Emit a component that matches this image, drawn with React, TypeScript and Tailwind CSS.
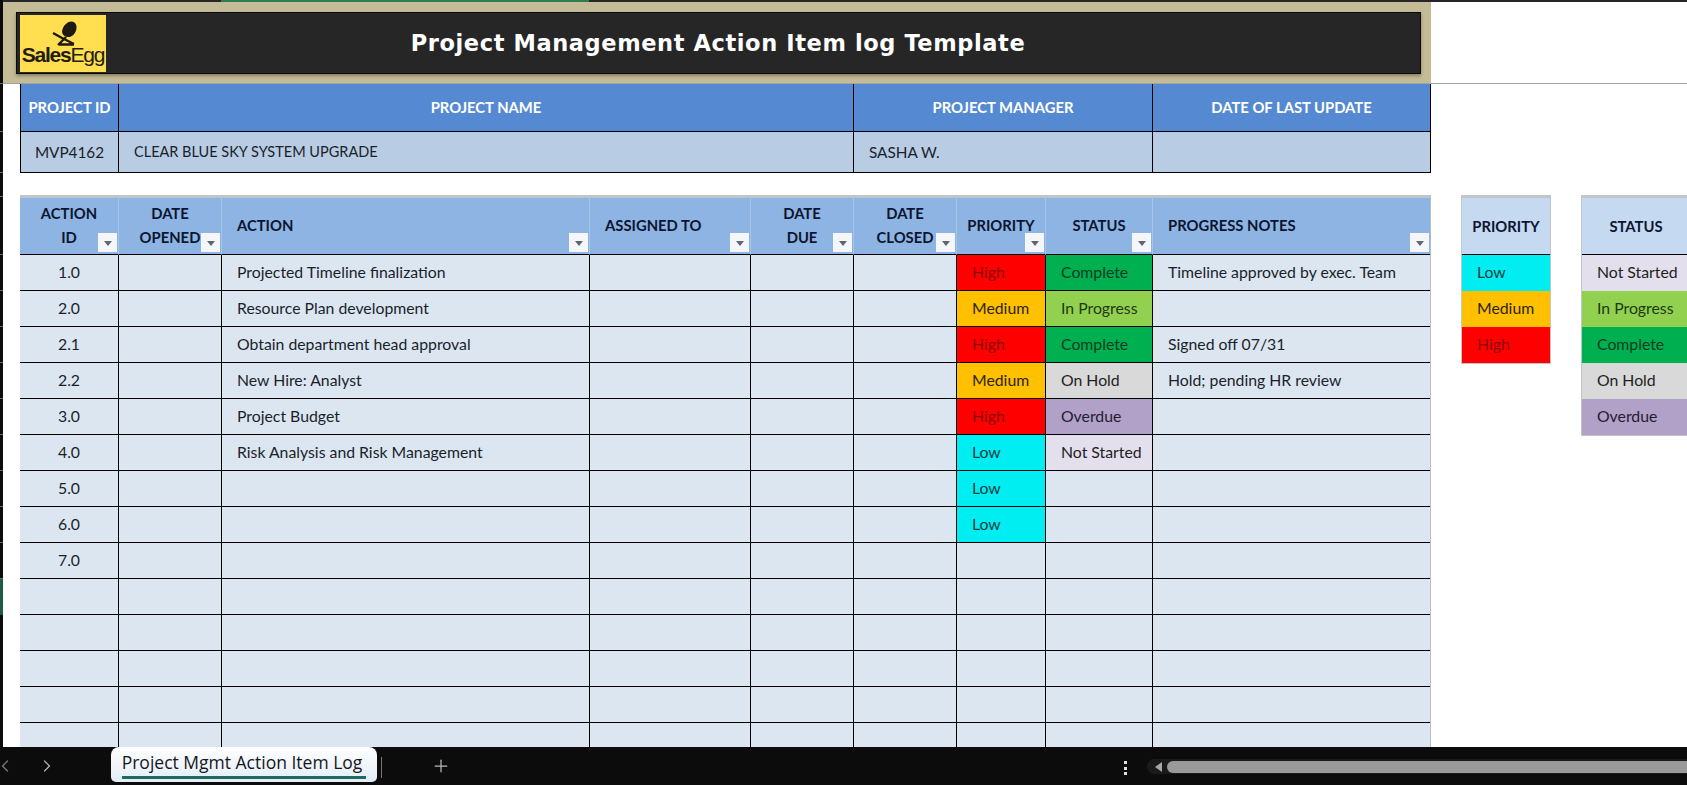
import { ChevronLeft, ChevronRight, Plus } from "lucide-react";

const BODY_FONT = "font-['Lato','Noto_Sans',sans-serif]";

const actionCols = [
  { label: ["ACTION", "ID"], align: "center" },
  { label: ["DATE", "OPENED"], align: "center" },
  { label: ["ACTION"], align: "left" },
  { label: ["ASSIGNED TO"], align: "left" },
  { label: ["DATE", "DUE"], align: "center" },
  { label: ["DATE", "CLOSED"], align: "center" },
  { label: ["PRIORITY"], align: "center" },
  { label: ["STATUS"], align: "center" },
  { label: ["PROGRESS NOTES"], align: "left" },
];

type Row = {
  id?: string;
  action?: string;
  priority?: "High" | "Medium" | "Low";
  status?: keyof typeof statusColors;
  notes?: string;
};

const priorityColors = {
  High: "bg-[#ff0000] text-[#8a0a0a]",
  Medium: "bg-[#ffc000] text-[#2c2410]",
  Low: "bg-[#00eef2] text-[#0f3c40]",
};

const statusColors = {
  Complete: "bg-[#00b050] text-[#063d20]",
  "In Progress": "bg-[#92d050] text-[#1f3a10]",
  "On Hold": "bg-[#d9d9d9] text-[#222222]",
  Overdue: "bg-[#b1a0c7] text-[#241c30]",
  "Not Started": "bg-[#e4dfec] text-[#222222]",
};

const rows: Row[] = [
  { id: "1.0", action: "Projected Timeline finalization", priority: "High", status: "Complete", notes: "Timeline approved by exec. Team" },
  { id: "2.0", action: "Resource Plan development", priority: "Medium", status: "In Progress" },
  { id: "2.1", action: "Obtain department head approval", priority: "High", status: "Complete", notes: "Signed off 07/31" },
  { id: "2.2", action: "New Hire: Analyst", priority: "Medium", status: "On Hold", notes: "Hold; pending HR review" },
  { id: "3.0", action: "Project Budget", priority: "High", status: "Overdue" },
  { id: "4.0", action: "Risk Analysis and Risk Management", priority: "Low", status: "Not Started" },
  { id: "5.0", priority: "Low" },
  { id: "6.0", priority: "Low" },
  { id: "7.0" },
  {},
  {},
  {},
  {},
  {},
];

function FilterButton() {
  return (
    <span className="absolute bottom-[2px] right-[1px] flex h-[19px] w-[19px] items-center justify-center bg-[#f4f6fa]">
      <span className="mt-[2px] h-0 w-0 border-x-[4px] border-t-[5px] border-x-transparent border-t-[#5f6670]" />
    </span>
  );
}

function Logo() {
  return (
    <div className="flex h-[57px] w-[86px] flex-col items-center bg-[#ffdf4f] pt-[5px]">
      <svg width="30" height="28" viewBox="0 0 30 28" className="ml-[4px] shrink-0">
        <path d="M21.5 1.5c3.8 0 5.8 3.7 4.8 8C25.3 14.3 21.3 17.6 17.5 17 13.2 16.5 11 12.7 12.6 9 14.2 4.8 17.6 1.5 21.5 1.5z" fill="#1d1a12" />
        <path d="M3 13l9 5 12 6M8 25l8-8M9 24.5h15" stroke="#1d1a12" strokeWidth="2.4" fill="none" />
      </svg>
      <div className="mt-[-4px] whitespace-nowrap font-['Liberation_Sans',sans-serif] text-[21px] leading-[22px] tracking-[-1.2px] text-[#221d10]">
        <span className="font-bold">Sales</span>
        <span>Egg</span>
      </div>
    </div>
  );
}

function GutterTicks() {
  // row header column is scrolled nearly out of view, only ticks stay visible
  return (
    <div className="flex w-[3px] shrink-0 flex-col bg-[#0b0b0b]">
      <div className="h-[84px] border-b border-[#6b6b6b]" />
      <div className="h-[48px] border-b border-[#6b6b6b]" />
      <div className="h-[41px] border-b border-[#6b6b6b]" />
      <div className="h-[24px] border-b border-[#6b6b6b]" />
      <div className="h-[58px] border-b border-[#6b6b6b]" />
      {rows.slice(0, 9).map((_, i) => (
        <div key={i} className="h-[36px] border-b border-[#6b6b6b]" />
      ))}
      <div className="h-[36px] bg-[#1f5a45]" />
    </div>
  );
}

function ColumnRuler() {
  return (
    <div className="flex h-[2px] bg-[#26262a]">
      <div className="w-[218px]" />
      <div className="w-[368px] bg-[#2e7d52]" />
    </div>
  );
}

function ActionTable() {
  return (
    <div className="grid w-[1411px] shrink-0 grid-cols-[98px_103px_368px_161px_103px_103px_89px_107px_278px] border-r border-[#bdbdbd]">
      {actionCols.map((col, i) => (
        <div
          key={i}
          className={`relative flex h-[60px] flex-col justify-center border-t-[3px] border-b border-t-[#c0c4cb] border-b-black bg-[#8db4e2] text-[14.8px] font-bold leading-[23.5px] text-[#0c1530] ${
            i > 0 ? "border-l border-l-[#a9c4e8]" : ""
          } ${col.align === "center" ? "items-center pb-[1px] text-center" : "items-start pl-[15px] pb-[1px]"}`}
        >
          {col.label.map((line) => (
            <span key={line}>{line}</span>
          ))}
          <FilterButton />
        </div>
      ))}
      {rows.map((row, i) => (
        <div key={i} className="contents text-[15.8px] text-[#1a1f2a]">
          <div className="flex h-[36px] items-center justify-center border-b border-black bg-[#dce6f1] pb-[2px]">{row.id}</div>
          <div className="h-[36px] border-b border-l border-black bg-[#dce6f1]" />
          <div className="flex h-[36px] items-center border-b border-l border-black bg-[#dce6f1] pb-[2px] pl-[15px]">{row.action}</div>
          <div className="h-[36px] border-b border-l border-black bg-[#dce6f1]" />
          <div className="h-[36px] border-b border-l border-black bg-[#dce6f1]" />
          <div className="h-[36px] border-b border-l border-black bg-[#dce6f1]" />
          <div
            className={`flex h-[36px] items-center border-b border-l border-black pb-[2px] pl-[15px] ${
              row.priority ? priorityColors[row.priority] : "bg-[#dce6f1]"
            }`}
          >
            {row.priority}
          </div>
          <div
            className={`flex h-[36px] items-center border-b border-l border-black pb-[2px] pl-[15px] ${
              row.status ? statusColors[row.status] : "bg-[#dce6f1]"
            }`}
          >
            {row.status}
          </div>
          <div className="flex h-[36px] items-center border-b border-l border-black bg-[#dce6f1] pb-[2px] pl-[15px]">{row.notes}</div>
        </div>
      ))}
    </div>
  );
}

function Legend({
  title,
  items,
  width,
}: {
  title: string;
  items: { label: string; className: string }[];
  width: string;
}) {
  return (
    <div className={`${width} shrink-0 border-x border-[#c0c4cb] text-[15.8px]`}>
      <div className="flex h-[60px] items-center justify-center border-t-[3px] border-b border-t-[#c0c4cb] border-b-black bg-[#c5d9f1] text-[14.8px] font-bold text-[#0c1530]">
        {title}
      </div>
      {items.map((it) => (
        <div key={it.label} className={`flex h-[36px] items-center pb-[2px] pl-[15px] ${it.className}`}>
          {it.label}
        </div>
      ))}
      <div className="h-px bg-[#c0c4cb]" />
    </div>
  );
}

function TabBar() {
  return (
    <div className="flex h-[38px] shrink-0 items-start bg-[#0c0c0c] text-[#9a9a9a]">
      <ChevronLeft className="ml-[-5px] mt-[9px] h-[20px] w-[20px] text-[#7a7a7a]" strokeWidth={1.5} />
      <ChevronRight className="ml-[22px] mt-[9px] h-[20px] w-[20px] text-[#b0b0b0]" strokeWidth={1.5} />
      <div className="ml-[54px] flex h-[35px] w-[266px] items-start justify-center rounded-b-[5px] rounded-t-[8px] bg-gradient-to-b from-[#ffffff] to-[#e3ecf6] pt-[4px] font-['Open_Sans',sans-serif] text-[17.5px] font-medium leading-[23px] text-[#14171d]">
        <span className="border-b-[3px] border-[#1f6b60] pb-[2px] pr-[4px]">Project Mgmt Action Item Log</span>
      </div>
      <div className="ml-[4px] mt-[10px] h-[21px] w-px bg-[#777777]" />
      <Plus className="ml-[49px] mt-[9px] h-[20px] w-[20px] text-[#b8b8b8]" strokeWidth={1.5} />
      <div className="ml-[673px] mt-[14px] flex h-[14px] w-[4px] flex-col justify-between">
        <span className="h-[3px] w-[3px] bg-[#e0e0e0]" />
        <span className="h-[3px] w-[3px] bg-[#e0e0e0]" />
        <span className="h-[3px] w-[3px] bg-[#e0e0e0]" />
      </div>
      <div className="ml-[19px] mt-[12px] flex h-[15px] flex-1 items-center rounded-l-[8px] bg-[#1a1a1a] pl-[8px]">
        <span className="h-0 w-0 border-y-[5px] border-r-[7px] border-y-transparent border-r-[#a6a6a6]" />
        <span className="ml-[5px] h-[12px] flex-1 rounded-l-[6px] bg-[#9a9a9a]" />
      </div>
    </div>
  );
}

export default function App() {
  return (
    <div className={`flex h-[785px] w-[1687px] flex-col overflow-hidden bg-white ${BODY_FONT}`}>
      <div className="flex min-h-0 flex-1">
        <GutterTicks />
        <div className="min-w-0 flex-1 overflow-hidden">
          <ColumnRuler />
          <div className="flex border-b border-[#a3a3a3]">
            <div className="h-[81px] w-[1428px] shrink-0 bg-[#c4bc96] pb-[9px] pl-[13px] pr-[10px] pt-[10px]">
              <div className="flex h-[62px] items-center border border-[#0a0a0a] bg-[#262626] pl-[3px] shadow-[0_2px_3px_rgba(80,70,40,0.5)]">
                <Logo />
                <div className="flex-1 pr-[90px] pt-[1px] text-center font-['DejaVu_Sans',sans-serif] text-[22.5px] font-bold tracking-[0.6px] text-white">
                  Project Management Action Item log Template
                </div>
              </div>
            </div>
          </div>

          <div className="ml-[17px] grid w-[1411px] grid-cols-[97px_735px_299px_278px] border-x border-b border-black text-[#1a1f2a]">
            {["PROJECT ID", "PROJECT NAME", "PROJECT MANAGER", "DATE OF LAST UPDATE"].map((h, i) => (
              <div
                key={h}
                className={`flex h-[48px] items-center justify-center border-b border-black bg-[#558ad3] text-[14.8px] font-bold text-white ${
                  i > 0 ? "border-l" : ""
                }`}
              >
                {h}
              </div>
            ))}
            <div className="flex h-[40px] items-center justify-center bg-[#b8cce4] text-[15.3px]">MVP4162</div>
            <div className="flex h-[40px] items-center border-l border-black bg-[#b8cce4] pl-[15px] text-[14.5px]">
              CLEAR BLUE SKY SYSTEM UPGRADE
            </div>
            <div className="flex h-[40px] items-center border-l border-black bg-[#b8cce4] pl-[15px] text-[15.3px]">
              SASHA W.
            </div>
            <div className="h-[40px] border-l border-black bg-[#b8cce4]" />
          </div>

          <div className="ml-[17px] mt-[22px] flex items-start">
            <ActionTable />
            <div className="ml-[30px]">
              <Legend
                title="PRIORITY"
                width="w-[90px]"
                items={[
                  { label: "Low", className: priorityColors.Low },
                  { label: "Medium", className: priorityColors.Medium },
                  { label: "High", className: priorityColors.High },
                ]}
              />
            </div>
            <div className="ml-[30px]">
              <Legend
                title="STATUS"
                width="w-[110px]"
                items={[
                  { label: "Not Started", className: statusColors["Not Started"] },
                  { label: "In Progress", className: statusColors["In Progress"] },
                  { label: "Complete", className: statusColors.Complete },
                  { label: "On Hold", className: statusColors["On Hold"] },
                  { label: "Overdue", className: statusColors.Overdue },
                ]}
              />
            </div>
          </div>
        </div>
      </div>
      <TabBar />
    </div>
  );
}
